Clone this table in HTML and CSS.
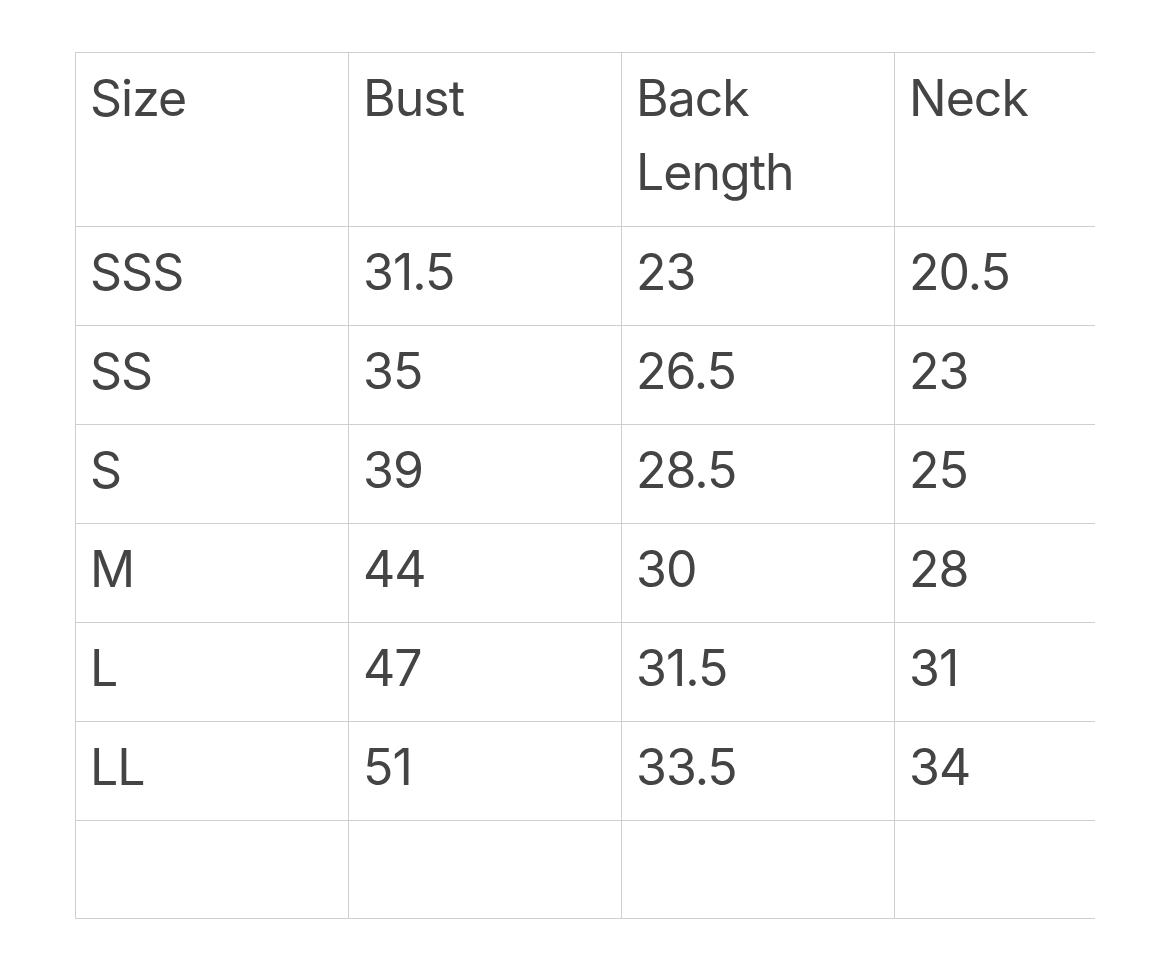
FILE: index.html
```html
<!DOCTYPE html>
<html>
<head>
<meta charset="utf-8">
<link rel="stylesheet" href="styles.css">
</head>
<body>
<div class="page">
  <div class="table-wrap">
    <table class="size-table">
      <thead>
        <tr><th>Size</th><th>Bust</th><th>Back Length</th><th>Neck</th></tr>
      </thead>
      <tbody>
        <tr><td>SSS</td><td>31.5</td><td>23</td><td>20.5</td></tr>
        <tr><td>SS</td><td>35</td><td>26.5</td><td>23</td></tr>
        <tr><td>S</td><td>39</td><td>28.5</td><td>25</td></tr>
        <tr><td>M</td><td>44</td><td>30</td><td>28</td></tr>
        <tr><td>L</td><td>47</td><td>31.5</td><td>31</td></tr>
        <tr><td>LL</td><td>51</td><td>33.5</td><td>34</td></tr>
        <tr class="empty-row"><td></td><td></td><td></td><td></td></tr>
      </tbody>
    </table>
  </div>
</div>
</body>
</html>
```
FILE: styles.css
```css
html, body {
  margin: 0;
  padding: 0;
  background: #fff;
}
.page {
  padding: 52px 0 0 75px;
}
.table-wrap {
  width: 1020px;
  overflow: hidden;
}
.size-table {
  border-collapse: collapse;
  table-layout: fixed;
  width: 1093px;
  font-family: Inter, "Noto Sans", sans-serif;
  font-size: 50px;
  letter-spacing: -1px;
  line-height: 74px;
  color: #444;
}
.size-table th,
.size-table td {
  width: 244px;
  border: 1px solid #cfcfcf;
  padding: 8px 14px 16px 14px;
  text-align: left;
  vertical-align: top;
  font-weight: 400;
  height: 74px;
  box-sizing: content-box;
}
.size-table th {
  padding-bottom: 17px;
}
.size-table .empty-row td {
  padding-bottom: 15px;
}
```
